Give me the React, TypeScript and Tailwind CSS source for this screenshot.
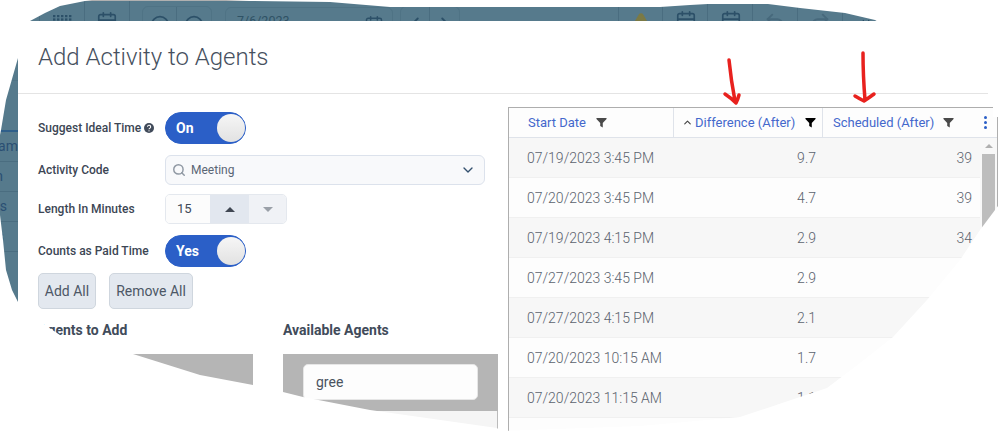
import React from "react";
import {
  Calendar,
  CirclePlus,
  CircleMinus,
  ChevronLeft,
  ChevronRight,
  TriangleAlert,
  Undo2,
  Redo2,
  ChevronDown,
  ChevronUp,
  Search,
} from "lucide-react";

const rows = [
  ["07/19/2023 3:45 PM", "9.7", "39"],
  ["07/20/2023 3:45 PM", "4.7", "39"],
  ["07/19/2023 4:15 PM", "2.9", "34"],
  ["07/27/2023 3:45 PM", "2.9", ""],
  ["07/27/2023 4:15 PM", "2.1", ""],
  ["07/20/2023 10:15 AM", "1.7", ""],
  ["07/20/2023 11:15 AM", "1.1", ""],
  ["", "", ""],
];

function Funnel({ className }: { className: string }) {
  return (
    <svg viewBox="0 0 12 12" className={className} fill="currentColor">
      <path d="M0.5 1h11v1.2L7.4 6.6V11.5L4.6 9.7V6.6L0.5 2.2z" />
    </svg>
  );
}

function Toggle({ label }: { label: string }) {
  return (
    <div className="flex h-[32px] w-[81px] items-center justify-between rounded-full border border-[#2b5fc7] bg-[#2b5fc7] pl-[10px] pr-[0px]">
      <span className="text-[14px] font-bold leading-none text-white">{label}</span>
      <span className="h-[28px] w-[28px] rounded-full bg-gradient-to-b from-[#f6f6f6] to-[#e2e2e2]" />
    </div>
  );
}

function Label({ children }: { children: React.ReactNode }) {
  return <div className="w-[127px] shrink-0 text-[12px] font-medium text-[#3c4654]">{children}</div>;
}

function GridDots() {
  const dots = [];
  for (let y = 0; y < 4; y++) {
    for (let x = 0; x < 5; x++) {
      dots.push(<rect key={`${x}-${y}`} x={x * 4} y={y * 3.4} width="2.4" height="2.2" />);
    }
  }
  return (
    <svg width="19" height="14" viewBox="0 0 19 14" fill="currentColor">
      {dots}
    </svg>
  );
}

function Toolbar() {
  return (
    <div className="flex h-[21px] shrink-0 items-start overflow-hidden border-t border-[#b0b0b0] text-[#2c5068]">
      <div className="h-[21px] w-[40px] border-r border-[#4a6d80]" />
      <div className="flex h-[21px] w-[45px] justify-center border-r border-[#4a6d80] pt-[14px]">
        <GridDots />
      </div>
      <div className="flex h-[21px] w-[45px] justify-center border-r border-[#4a6d80] pt-[10px]">
        <Calendar size={22} strokeWidth={1.8} />
      </div>
      <div className="ml-[12px] mt-[5px] flex h-[30px] w-[70px] rounded-[6px] border border-[#4f7385]">
        <div className="flex w-[35px] justify-center border-r border-[#4a6d80] pt-[8px]">
          <CirclePlus size={20} strokeWidth={2} />
        </div>
        <div className="flex w-[35px] justify-center pt-[8px]">
          <CircleMinus size={20} strokeWidth={2} />
        </div>
      </div>
      <div className="ml-[13px] mt-[6px] flex h-[30px] w-[168px] items-start justify-between rounded-[6px] border border-[#4f7385] pl-[11px] pr-[8px] pt-[4px] text-[12.5px] text-[#2f5265]">
        <span>7/6/2023</span>
        <Calendar size={20} strokeWidth={1.8} className="mt-[3px] text-[#2c5068]" />
      </div>
      <div className="ml-[7px] mt-[5px] flex h-[30px] w-[60px] rounded-[6px] border border-[#4f7385]">
        <div className="flex w-[30px] justify-center border-r border-[#4a6d80] pt-[6px]">
          <ChevronLeft size={22} strokeWidth={2} />
        </div>
        <div className="flex w-[30px] justify-center pt-[6px]">
          <ChevronRight size={22} strokeWidth={2} />
        </div>
      </div>
      <div className="h-[21px] w-[158px]" />
      <div className="flex h-[21px] w-[45px] justify-center border-x border-[#4a6d80] pt-[10px] text-[#7b7a45]">
        <TriangleAlert size={24} fill="#7b7a45" strokeWidth={1.5} />
      </div>
      <div className="flex h-[21px] w-[45px] justify-center border-r border-[#4a6d80] pl-[2px] pt-[9px]">
        <Calendar size={22} strokeWidth={1.8} />
      </div>
      <div className="flex h-[21px] w-[45px] justify-center border-r border-[#4a6d80] pl-[2px] pt-[9px]">
        <Calendar size={22} strokeWidth={1.8} />
      </div>
      <div className="flex h-[21px] w-[45px] justify-center border-r border-[#4a6d80] pt-[10px] text-[#47697c]">
        <Undo2 size={22} strokeWidth={2} />
      </div>
      <div className="flex h-[21px] w-[45px] justify-center border-r border-[#4a6d80] pt-[10px] text-[#47697c]">
        <Redo2 size={22} strokeWidth={2} />
      </div>
      <div className="flex h-[21px] w-[45px] justify-center pt-[18px]">
        <Calendar size={16} strokeWidth={2} />
      </div>
    </div>
  );
}

function Sidebar() {
  const cell = "flex h-[30px] w-[18px] items-center justify-end overflow-hidden border-b border-[#4a6d80] text-[14px] text-[#2a4f73]";
  return (
    <div className="w-[18px] shrink-0">
      <div className="h-[60px] border-b border-[#4f7385]" />
      <div className="h-[51px] border-b-2 border-[#2f5f8a]" />
      <div className={cell}>
        <span className="whitespace-nowrap">Diam</span>
      </div>
      <div className={cell}>
        <span className="pr-[15px]">n</span>
      </div>
      <div className={cell}>
        <span className="pr-[11px]">s</span>
      </div>
      <div className={cell}>
        <span className="pr-[14px] text-[#3d6078]">s</span>
      </div>
    </div>
  );
}

function AgentsColumn({ title, search }: { title: string; search?: boolean }) {
  return (
    <div className="w-[215px]">
      <div className="h-[20px] text-[14px] font-bold leading-[20px] text-[#414b5a]">{title}</div>
      <div className="mt-[14px] h-[57px] bg-[#b5b5b5] pl-[20px] pr-[20px] pt-[10px]">
        {search && (
          <div className="flex h-[36px] w-[175px] items-center rounded-[5px] border border-[#e6e6e6] bg-[#fdfdfd] pl-[12px] text-[14px] text-[#4a5360]">
            gree
          </div>
        )}
      </div>
      <div className="h-[60px] border-r border-[#bbbbbb] bg-[#f5f5f5]" />
    </div>
  );
}

function LeftForm() {
  return (
    <div className="w-[490px] shrink-0 pl-[20px] pt-[18px]">
      <div className="flex h-[32px] items-center">
        <Label>
          <span className="inline-flex items-center gap-[3px]">
            Suggest Ideal Time
            <svg viewBox="0 0 12 12" className="h-[10px] w-[10px]">
              <circle cx="6" cy="6" r="6" fill="#414b5a" />
              <path d="M4.2 4.6a1.9 1.9 0 1 1 2.8 1.6c-.6.3-1 .6-1 1.2" stroke="#fff" strokeWidth="1.3" fill="none" />
              <circle cx="6" cy="9.4" r=".8" fill="#fff" />
            </svg>
          </span>
        </Label>
        <Toggle label="On" />
      </div>
      <div className="mt-[11px] flex h-[30px] items-center">
        <Label>Activity Code</Label>
        <div className="flex h-[30px] w-[320px] items-center rounded-[6px] border border-[#dce2ec] bg-[#f8f9fb] pl-[6px] pr-[8px] text-[12px] text-[#5a6675]">
          <Search size={14} strokeWidth={2.5} className="text-[#8f98a3]" />
          <span className="ml-[5px] flex-1">Meeting</span>
          <ChevronDown size={16} strokeWidth={2} className="text-[#33506e]" />
        </div>
      </div>
      <div className="mt-[9px] flex h-[30px] items-center">
        <Label>Length In Minutes</Label>
        <div className="flex h-[30px] w-[122px] overflow-hidden rounded-[5px] border border-[#e4e8ee]">
          <div className="flex w-[44px] items-center bg-[#fcfcfc] pl-[11px] text-[13px] text-[#3f4a59]">15</div>
          <div className="flex w-[39px] items-center justify-center bg-[#e2e7ef]">
            <span className="h-0 w-0 border-x-[5px] border-b-[5px] border-x-transparent border-b-[#3f4652]" />
          </div>
          <div className="flex flex-1 items-center justify-center bg-[#f0f2f6]">
            <span className="h-0 w-0 border-x-[5px] border-t-[5px] border-x-transparent border-t-[#9aa0a8]" />
          </div>
        </div>
      </div>
      <div className="mt-[11px] flex h-[32px] items-center">
        <Label>Counts as Paid Time</Label>
        <Toggle label="Yes" />
      </div>
      <div className="mt-[6px] flex gap-[13px]">
        <button className="h-[36px] w-[58px] rounded-[5px] border border-[#cfd6de] bg-[#e3e8ef] text-[14px] text-[#4d5766]">Add All</button>
        <button className="h-[36px] w-[84px] rounded-[5px] border border-[#cfd6de] bg-[#e3e8ef] text-[14px] text-[#4d5766]">Remove All</button>
      </div>
      <div className="mt-[11px] flex gap-[30px]">
        <AgentsColumn title="Agents to Add" />
        <AgentsColumn title="Available Agents" search />
      </div>
    </div>
  );
}

function Grid() {
  return (
    <div className="mt-[13px] flex h-[340px] w-[490px] shrink-0 flex-col border-x border-t border-[#aeaeae] bg-white">
      <div className="flex h-[30px] shrink-0 items-center border-b border-[#dfe3ea] bg-[#fdfdfd] text-[13px] text-[#4468cc]">
        <div className="flex h-full w-[165px] items-center border-r border-[#dfe3ea] pl-[19px]">
          <span>Start Date</span>
          <Funnel className="ml-[10px] h-[11px] w-[11px] text-[#4a4a4a]" />
        </div>
        <div className="flex h-full w-[149px] items-center border-r border-[#dfe3ea] pl-[8px]">
          <ChevronUp size={11} strokeWidth={2.5} className="text-[#444444]" />
          <span className="ml-[2px]">Difference (After)</span>
          <Funnel className="ml-[10px] h-[11px] w-[11px] text-black" />
        </div>
        <div className="flex h-full flex-1 items-center pl-[10px]">
          <span>Scheduled (After)</span>
          <Funnel className="ml-[9px] h-[11px] w-[11px] text-[#4a4a4a]" />
          <span className="ml-[30px] flex flex-col gap-[2px]">
            <span className="h-[3px] w-[3px] rounded-full bg-[#2b5fc7]" />
            <span className="h-[3px] w-[3px] rounded-full bg-[#2b5fc7]" />
            <span className="h-[3px] w-[3px] rounded-full bg-[#2b5fc7]" />
          </span>
        </div>
      </div>
      <div className="flex min-h-0 flex-1">
        <div className="w-[471px] text-[14px] font-light text-[#5b636e]">
          {rows.map((r, i) => (
            <div
              key={i}
              className={`flex h-[40px] items-center border-b border-[#f0f0f0] pt-[2px] ${i % 2 === 0 ? "bg-[#f7f7f7]" : "bg-[#fdfdfd]"}`}
            >
              <div className="w-[165px] pl-[18px]">{r[0]}</div>
              <div className="w-[149px] pr-[7px] text-right">{r[1]}</div>
              <div className="flex-1 pr-[8px] text-right">{r[2]}</div>
            </div>
          ))}
        </div>
        <div className="flex w-[17px] flex-col items-center bg-[#f8f8f8]">
          <span className="mt-[6px] h-0 w-0 border-x-[4px] border-b-[4px] border-x-transparent border-b-[#b0b0b0]" />
          <div className="mt-[6px] h-[200px] w-[13px] bg-[#bdbdbd]" />
        </div>
      </div>
    </div>
  );
}

export default function App() {
  return (
    <div
      className="relative flex h-[432px] w-[1007px] flex-col overflow-hidden bg-[#567a8c]"
      style={{ fontFamily: "Roboto, 'Liberation Sans', sans-serif" }}
    >
      <Toolbar />
      <div className="flex min-h-0 flex-1">
        <Sidebar />
        <div className="flex-1 overflow-hidden bg-white">
          <div className="flex h-[73px] items-center border-b border-[#e4e4e4] pl-[20px] pt-[0px] text-[24px] font-light text-[#46505e]">
            Add Activity to Agents
          </div>
          <div className="flex">
            <LeftForm />
            <Grid />
          </div>
        </div>
      </div>

      {/* torn white mask of the screenshot */}
      <svg className="pointer-events-none absolute left-0 top-0" width="1007" height="432" viewBox="0 0 1007 432">
        <path
          fillRule="evenodd"
          fill="#fff"
          d="M0 0H1007V432H0Z M30 21 L45 13 L60 6 L85 1 L92 0 L226 0 L250 1 L330 2 L390 7 L660 7 L690 5 L708 4 L768 4 L800 8 L845 13 L875 20 L988 90 L988 94 L993 107 L993 117 L998 117 L998 206 L980 230 L960 260 L927 300 L893 337 L860 363 L827 388 L800 397 L740 417 L640 426 L500 431 L497 428 L370 410 L303 397 L283 392 L253 385 L200 375 L133 354 L60 335 L45 325 L18 302 L12 290 L6 270 L3 240 L0 215 L0 135 L1 130 L6 100 L18 58 L18 21 Z"
        />
      </svg>

      {/* hand-drawn red arrows */}
      <svg className="pointer-events-none absolute left-0 top-0" width="1007" height="432" viewBox="0 0 1007 432" fill="none" stroke="#e8211e" strokeWidth="3.5" strokeLinecap="round" strokeLinejoin="round">
        <path d="M729 60 Q731 80 735 101 M725 94 Q731 98 736 103 Q738 99 739 95" />
        <path d="M863 53 Q863 75 865 100 M855 96 Q860 99 864 101 Q870 97 874 94" />
      </svg>
    </div>
  );
}
